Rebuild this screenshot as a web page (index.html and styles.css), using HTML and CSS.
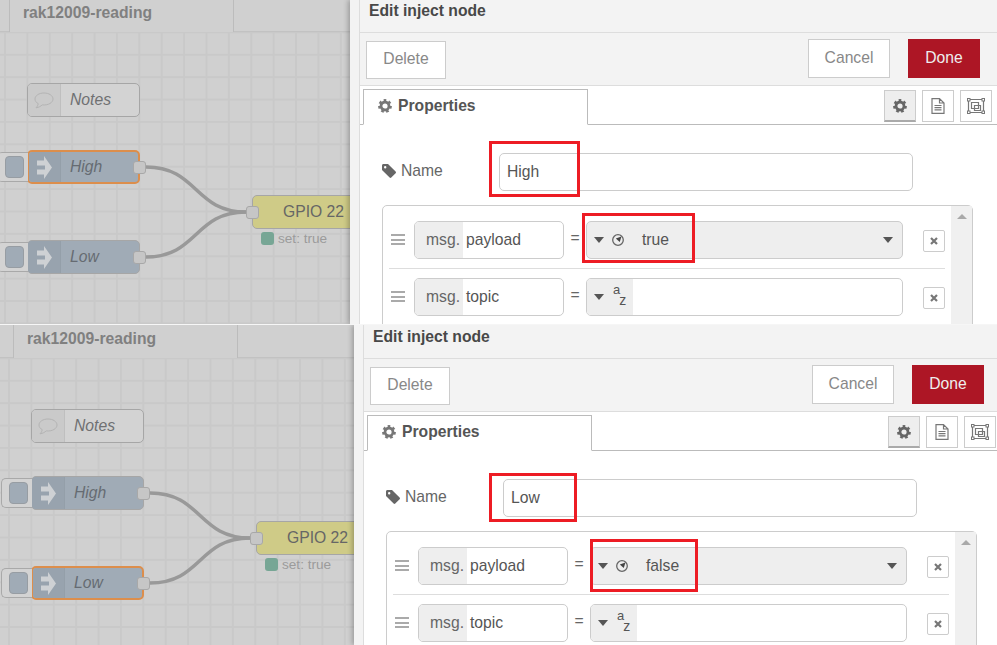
FILE: index.html
```html
<!DOCTYPE html>
<html lang="en">
<head>
    <meta charset="UTF-8">
    <meta name="viewport" content="width=device-width, initial-scale=1.0">
    <title>Edit inject node</title>
    <link rel="stylesheet" href="styles.css">
</head>
<body>
    <svg class="sprites" width="0" height="0">
        <symbol id="gear" viewBox="0 0 14 14">
            <circle cx="7" cy="7" r="4" fill="none" stroke="currentColor" stroke-width="2.8"/>
            <circle cx="7" cy="7" r="5.7" fill="none" stroke="currentColor" stroke-width="2.4" stroke-dasharray="2.6 2.37"/>
        </symbol>
        <symbol id="tag" viewBox="0 0 14 14">
            <path fill="currentColor" fill-rule="evenodd" d="M0 1.5 C0 .6 .6 0 1.5 0 H6 L13.6 7.6 C14.1 8.1 14.1 8.8 13.6 9.3 L9.3 13.6 C8.8 14.1 8.1 14.1 7.6 13.6 L0 6 Z M3.2 2 A1.2 1.2 0 1 0 3.2 4.4 A1.2 1.2 0 1 0 3.2 2 Z"/>
        </symbol>
        <symbol id="file" viewBox="0 0 14 16">
            <path fill="none" stroke="currentColor" stroke-width="1.2" d="M1 .6 H8.5 L13 5 V15.4 H1 Z M8.5 .6 V5 H13 M3.5 7.5 H10.5 M3.5 9.7 H10.5 M3.5 11.9 H10.5"/>
        </symbol>
        <symbol id="frame" viewBox="0 0 18 16">
            <path fill="none" stroke="currentColor" stroke-width="1.2" d="M2 1.5 H16 M2 14.5 H16 M1.5 2 V14 M16.5 2 V14 M4.5 4.5 H11.5 V10.5 H4.5 Z M7.5 7.5 H13.5 V12.5 H7.5 Z"/>
            <rect x=".5" y=".5" width="2.5" height="2.5" fill="#fff" stroke="currentColor"/>
            <rect x="15" y=".5" width="2.5" height="2.5" fill="#fff" stroke="currentColor"/>
            <rect x=".5" y="13" width="2.5" height="2.5" fill="#fff" stroke="currentColor"/>
            <rect x="15" y="13" width="2.5" height="2.5" fill="#fff" stroke="currentColor"/>
        </symbol>
        <symbol id="cross" viewBox="0 0 8 8">
            <path fill="none" stroke="currentColor" stroke-width="2.2" d="M1 1 L7 7 M7 1 L1 7"/>
        </symbol>
        <symbol id="dial" viewBox="0 0 12 12">
            <circle cx="6" cy="6" r="5.3" fill="none" stroke="currentColor" stroke-width="1.3"/>
            <path fill="#444" d="M9.4 2.6 L7.8 8 L3.8 4.4 Z"/>
        </symbol>
        <symbol id="inject" viewBox="0 0 15 23">
            <path fill="currentColor" d="M7 0 L15 11.5 L7 23 V18.5 H0 V13.5 H8 V9.5 H0 V4.5 H7 Z"/>
        </symbol>
        <symbol id="comment" viewBox="0 0 20 17">
            <path fill="none" stroke="currentColor" d="M10 1 C5 1 1 3.6 1 7 C1 9 2.2 10.6 4.2 11.6 C4 13 3.3 14.6 2 15.8 C4.8 15.4 6.8 14.2 8.2 12.9 C14.5 13.5 19 10.5 19 7 C19 3.6 15 1 10 1 Z"/>
        </symbol>
    </svg>

    <!-- first capture: High selected -->
    <section class="shot">
        <div class="canvas">
            <div class="canvas-tabs"><div class="canvas-tab">rak12009-reading</div></div>
            <div class="flow">
                <svg class="wires" width="360" height="324">
                    <path d="M146 167 C198 167 194 212 246 212"/>
                    <path d="M146 257 C198 257 194 212 246 212"/>
                </svg>
                <div class="node node-comment node-notes">
                    <div class="node-icon"><svg width="20" height="17"><use href="#comment"/></svg></div>
                    <span class="node-label">Notes</span>
                </div>
                <div class="node node-inject node-high selected">
                    <div class="node-button"><span></span></div>
                    <div class="node-icon"><svg width="15" height="23"><use href="#inject"/></svg></div>
                    <span class="node-label">High</span>
                    <i class="port port-out"></i>
                </div>
                <div class="node node-inject node-low">
                    <div class="node-button"><span></span></div>
                    <div class="node-icon"><svg width="15" height="23"><use href="#inject"/></svg></div>
                    <span class="node-label">Low</span>
                    <i class="port port-out"></i>
                </div>
                <div class="node node-gpio">
                    <i class="port port-in"></i>
                    <span class="gpio-label">GPIO 22</span>
                    <div class="node-status"><i></i>set: true</div>
                </div>
            </div>
        </div>
        <div class="gutter"></div>
        <div class="tray">
            <div class="tray-title">Edit inject node</div>
            <div class="tray-actions">
                <button class="btn btn-delete">Delete</button>
                <div class="btn-group">
                    <button class="btn">Cancel</button>
                    <button class="btn btn-done">Done</button>
                </div>
            </div>
            <div class="tabs">
                <div class="tab"><svg width="14" height="14"><use href="#gear"/></svg>Properties</div>
                <div class="tab-tools">
                    <div class="tool active"><svg width="14" height="14"><use href="#gear"/></svg></div>
                    <div class="tool"><svg width="14" height="16"><use href="#file"/></svg></div>
                    <div class="tool"><svg width="18" height="16"><use href="#frame"/></svg></div>
                </div>
            </div>
            <div class="form">
                <div class="name-row">
                    <label class="name-label"><svg width="14" height="14"><use href="#tag"/></svg>Name</label>
                    <div class="field">High</div>
                </div>
                <div class="prop-list">
                    <div class="prop-rows">
                        <div class="prop-row">
                            <div class="handle"></div>
                            <div class="msg-field"><span class="msg-prefix">msg.</span>payload</div>
                            <span class="equals">=</span>
                            <div class="typed typed-wide">
                                <i class="caret"></i>
                                <svg class="dial" width="12" height="12"><use href="#dial"/></svg>
                                <span class="typed-value">true</span>
                                <i class="caret caret-end"></i>
                            </div>
                            <button class="remove"><svg width="8" height="8"><use href="#cross"/></svg></button>
                        </div>
                        <div class="prop-row">
                            <div class="handle"></div>
                            <div class="msg-field"><span class="msg-prefix">msg.</span>topic</div>
                            <span class="equals">=</span>
                            <div class="typed">
                                <div class="typed-select"><i class="caret"></i><span class="az"><sup>a</sup><sub>z</sub></span></div>
                            </div>
                            <button class="remove"><svg width="8" height="8"><use href="#cross"/></svg></button>
                        </div>
                    </div>
                    <div class="scrollbar"><i></i></div>
                </div>
            </div>
            <div class="mark mark-name-high"></div>
            <div class="mark mark-value-high"></div>
        </div>
    </section>

    <!-- second capture: Low selected -->
    <section class="shot shot-low">
        <div class="canvas">
            <div class="canvas-tabs"><div class="canvas-tab">rak12009-reading</div></div>
            <div class="flow">
                <svg class="wires" width="360" height="324">
                    <path d="M146 167 C198 167 194 212 246 212"/>
                    <path d="M146 257 C198 257 194 212 246 212"/>
                </svg>
                <div class="node node-comment node-notes">
                    <div class="node-icon"><svg width="20" height="17"><use href="#comment"/></svg></div>
                    <span class="node-label">Notes</span>
                </div>
                <div class="node node-inject node-high">
                    <div class="node-button"><span></span></div>
                    <div class="node-icon"><svg width="15" height="23"><use href="#inject"/></svg></div>
                    <span class="node-label">High</span>
                    <i class="port port-out"></i>
                </div>
                <div class="node node-inject node-low selected">
                    <div class="node-button"><span></span></div>
                    <div class="node-icon"><svg width="15" height="23"><use href="#inject"/></svg></div>
                    <span class="node-label">Low</span>
                    <i class="port port-out"></i>
                </div>
                <div class="node node-gpio">
                    <i class="port port-in"></i>
                    <span class="gpio-label">GPIO 22</span>
                    <div class="node-status"><i></i>set: true</div>
                </div>
            </div>
        </div>
        <div class="gutter"></div>
        <div class="tray">
            <div class="tray-title">Edit inject node</div>
            <div class="tray-actions">
                <button class="btn btn-delete">Delete</button>
                <div class="btn-group">
                    <button class="btn">Cancel</button>
                    <button class="btn btn-done">Done</button>
                </div>
            </div>
            <div class="tabs">
                <div class="tab"><svg width="14" height="14"><use href="#gear"/></svg>Properties</div>
                <div class="tab-tools">
                    <div class="tool active"><svg width="14" height="14"><use href="#gear"/></svg></div>
                    <div class="tool"><svg width="14" height="16"><use href="#file"/></svg></div>
                    <div class="tool"><svg width="18" height="16"><use href="#frame"/></svg></div>
                </div>
            </div>
            <div class="form">
                <div class="name-row">
                    <label class="name-label"><svg width="14" height="14"><use href="#tag"/></svg>Name</label>
                    <div class="field">Low</div>
                </div>
                <div class="prop-list">
                    <div class="prop-rows">
                        <div class="prop-row">
                            <div class="handle"></div>
                            <div class="msg-field"><span class="msg-prefix">msg.</span>payload</div>
                            <span class="equals">=</span>
                            <div class="typed typed-wide">
                                <i class="caret"></i>
                                <svg class="dial" width="12" height="12"><use href="#dial"/></svg>
                                <span class="typed-value">false</span>
                                <i class="caret caret-end"></i>
                            </div>
                            <button class="remove"><svg width="8" height="8"><use href="#cross"/></svg></button>
                        </div>
                        <div class="prop-row">
                            <div class="handle"></div>
                            <div class="msg-field"><span class="msg-prefix">msg.</span>topic</div>
                            <span class="equals">=</span>
                            <div class="typed">
                                <div class="typed-select"><i class="caret"></i><span class="az"><sup>a</sup><sub>z</sub></span></div>
                            </div>
                            <button class="remove"><svg width="8" height="8"><use href="#cross"/></svg></button>
                        </div>
                    </div>
                    <div class="scrollbar"><i></i></div>
                </div>
            </div>
            <div class="mark mark-name-low"></div>
            <div class="mark mark-value-low"></div>
        </div>
    </section>
</body>
</html>
```

FILE: styles.css
```css
*{
    padding: 0;
    margin: 0;
    box-sizing: border-box;
    font-family: "Liberation Sans", Arial, sans-serif;
}
html, body{
    width: 997px;
    height: 645px;
    overflow: hidden;
    background: #f3f3f3;
}
body{
    font-size: 15.7px;
    color: #555;
}
.sprites{
    position: absolute;
}

/* each capture is a canvas on the left and the edit tray on the right */
.shot{
    display: flex;
    height: 324px;
    overflow: hidden;
}
.shot-low{
    height: 321px;
    border-top: 1px solid #f6f6f6;
}

/* canvas */
.canvas{
    position: relative;
    flex: none;
    width: 350px;
    overflow: hidden;
    background-color: #d0d0d0;
    background-image:
        linear-gradient(#c9c9c9 2px, transparent 2px),
        linear-gradient(90deg, #c9c9c9 2px, transparent 2px);
    background-size: 22.4px 22.4px;
    background-position: 4px 9px;
}
.shot-low .canvas{
    width: 354px;
    background-position: 8px 10px;
}
.canvas-tabs{
    height: 32px;
    padding-left: 9px;
    background: #d0d0d0;
    border-bottom: 1px solid #c2c2c2;
}
.shot-low .canvas-tabs{
    height: 33px;
    padding-left: 13px;
}
.canvas-tab{
    width: 225px;
    height: 32px;
    padding: 4px 0 0 13px;
    font-weight: bold;
    color: #808080;
    background: #d0d0d0;
    border-left: 1px solid #bcbcbc;
    border-right: 1px solid #bcbcbc;
}
.shot-low .canvas-tab{
    height: 33px;
    padding-top: 5px;
}
.flow{
    position: absolute;
    left: 0;
    top: 0;
}
.shot-low .flow{
    left: 4px;
    top: 1px;
}
.wires{
    position: absolute;
    left: 0;
    top: 0;
}
.wires path{
    fill: none;
    stroke: #999;
    stroke-width: 3.5;
}

/* nodes */
.node{
    position: absolute;
    display: flex;
    align-items: center;
    left: 27px;
    width: 113px;
    height: 34px;
    border: 1px solid #a6a6a6;
    border-radius: 5px;
    background: #a0abb6;
}
.node.selected{
    border: 2px solid #dc8e4c;
}
.node-notes{
    top: 83px;
    background: #d3d3d3;
}
.node-high{
    top: 150px;
}
.node-low{
    top: 240px;
}
.node-icon{
    flex: none;
    display: flex;
    align-items: center;
    justify-content: center;
    align-self: stretch;
    width: 33px;
    color: #ced1d4;
    background: #98a3ae;
    border-right: 1px solid #949fa9;
    border-radius: 4px 0 0 4px;
}
.selected .node-icon{
    width: 32px;
}
.node-comment .node-icon{
    color: #b4b4b4;
    background: #cacaca;
    border-right-color: #bfbfbf;
}
.node-label{
    padding-left: 9px;
    font-style: italic;
    color: #666b72;
}
.node-comment .node-label{
    color: #6f7072;
}
.node-button{
    position: absolute;
    left: -31px;
    top: 1px;
    width: 31px;
    height: 30px;
    padding: 3px 0 0 7px;
    background: #d3d3d3;
    border: 1px solid #a9a9a9;
    border-right: none;
    border-radius: 5px 0 0 5px;
}
.selected .node-button{
    left: -32px;
    top: 0;
}
.node-button span{
    display: block;
    width: 19px;
    height: 22px;
    background: #a0abb6;
    border: 1px solid #979da3;
    border-radius: 4px;
}
.port{
    position: absolute;
    width: 13px;
    height: 13px;
    background: #c6c6c6;
    border: 1px solid #a8a8a8;
    border-radius: 3px;
}
.port-out{
    left: 105px;
    top: 10px;
}
.selected .port-out{
    left: 104px;
    top: 9px;
}
.port-in{
    left: -7px;
    top: 10px;
}
.node-gpio{
    left: 252px;
    top: 195px;
    width: 130px;
    background: #cfcb87;
}
.gpio-label{
    padding-left: 30px;
    color: #666;
}
.node-status{
    position: absolute;
    display: flex;
    align-items: center;
    gap: 4px;
    left: 8px;
    top: 35px;
    font-size: 13.6px;
    color: #9b9b9b;
    white-space: nowrap;
}
.node-status i{
    width: 13px;
    height: 13px;
    background: #77a695;
    border-radius: 3px;
}

/* shadow between canvas and tray */
.gutter{
    flex: none;
    position: relative;
    width: 10px;
    background: #f3f3f3;
    border-right: 1px solid #ddd;
    box-shadow: -2px 0 5px rgba(0,0,0,0.25);
}

/* tray */
.tray{
    position: relative;
    flex: none;
    width: 637px;
    background: #fff;
}
.tray-title{
    height: 33px;
    padding: 2px 0 0 9px;
    font-weight: bold;
    color: #484848;
    background: #f3f3f3;
    border-bottom: 1px solid #ddd;
}
.shot-low .tray-title{
    height: 34px;
    padding-top: 3px;
}
.tray-actions{
    display: flex;
    justify-content: space-between;
    align-items: flex-start;
    height: 53px;
    padding: 6px 17px 0 6px;
    background: #f3f3f3;
    border-bottom: 1px solid #ddd;
}
.btn{
    height: 39px;
    width: 82px;
    padding-bottom: 2px;
    font-size: 15.7px;
    color: #888;
    background: #fff;
    border: 1px solid #ccc;
}
.btn-delete{
    width: 80px;
    margin-top: 2px;
    height: 38px;
}
.btn-group{
    display: flex;
    gap: 18px;
}
.btn-done{
    width: 72px;
    color: #eee;
    background: #ad1625;
    border-color: #ad1625;
}
.tabs{
    display: flex;
    justify-content: space-between;
    align-items: flex-end;
    height: 39px;
    padding: 0 5px 0 3px;
    border-bottom: 1px solid #bbb;
}
.tab{
    display: flex;
    align-items: center;
    gap: 6px;
    width: 225px;
    height: 36px;
    margin-bottom: -1px;
    padding: 0 0 3px 14px;
    font-weight: bold;
    color: #555;
    background: #fff;
    border: 1px solid #bbb;
    border-bottom: 1px solid #fff;
}
.tab svg{
    color: #777;
}
.tab-tools{
    display: flex;
    gap: 6px;
    margin-bottom: 2px;
}
.tool{
    display: flex;
    align-items: center;
    justify-content: center;
    width: 32px;
    height: 32px;
    color: #777;
    background: #fff;
    border: 1px solid #ccc;
}
.tool.active{
    color: #666;
    background: #eee;
    border-bottom: 2px solid #aaa;
}

/* form */
.form{
    padding: 28px 0 0 22px;
}
.name-row{
    display: flex;
    align-items: center;
}
.name-label{
    display: flex;
    align-items: center;
    gap: 5px;
    width: 117px;
    padding-bottom: 3px;
    color: #666;
}
.name-label svg{
    color: #666;
}
.field{
    width: 414px;
    height: 38px;
    padding: 9px 0 0 7px;
    background: #fff;
    border: 1px solid #ccc;
    border-radius: 5px;
}
.prop-list{
    display: flex;
    width: 591px;
    height: 160px;
    margin-top: 14px;
    border: 1px solid #ccc;
    border-radius: 5px;
}
.prop-rows{
    flex: 1;
    padding: 15px 0 0 6px;
}
.prop-row{
    display: flex;
    align-items: flex-start;
    height: 48px;
    margin-bottom: 9px;
    border-bottom: 1px solid #ddd;
}
.handle{
    width: 14px;
    height: 11px;
    margin: 13px 9px 0 2px;
    border-top: 2px solid #aaa;
    border-bottom: 2px solid #aaa;
    background: linear-gradient(#aaa, #aaa) center / 100% 2px no-repeat;
}
.msg-field{
    display: flex;
    align-items: center;
    width: 150px;
    height: 38px;
    color: #555;
    background: #fff;
    border: 1px solid #ccc;
    border-radius: 5px;
    overflow: hidden;
}
.msg-prefix{
    display: flex;
    align-items: center;
    align-self: stretch;
    width: 48px;
    margin-right: 3px;
    padding-left: 11px;
    color: #666;
    background: #eee;
}
.equals{
    width: 22px;
    padding-top: 8px;
    text-align: center;
    color: #666;
}
.typed{
    display: flex;
    align-items: center;
    width: 317px;
    height: 38px;
    background: #fff;
    border: 1px solid #ccc;
    border-radius: 5px;
    overflow: hidden;
}
.typed-wide{
    padding-left: 7px;
    background: #eee;
}
.typed-select{
    display: flex;
    align-items: center;
    align-self: stretch;
    width: 46px;
    padding-left: 7px;
    background: #eee;
}
.caret{
    flex: none;
    width: 0;
    height: 0;
    border-left: 5px solid transparent;
    border-right: 5px solid transparent;
    border-top: 6px solid #555;
}
.caret-end{
    margin-left: auto;
    margin-right: 9px;
}
.dial{
    margin-left: 8px;
    color: #666;
}
.typed-value{
    margin-left: 18px;
    color: #555;
}
.az{
    display: flex;
    margin-left: 9px;
    font-size: 13px;
    color: #555;
}
.az sup{
    font-size: 13px;
    line-height: 1;
    margin-top: -4px;
}
.az sub{
    font-size: 14px;
    line-height: 1;
    margin-top: 6px;
    margin-left: -1px;
}
.remove{
    display: flex;
    align-items: center;
    justify-content: center;
    width: 22px;
    height: 22px;
    margin: 9px 0 0 20px;
    color: #777;
    background: #fff;
    border: 1px solid #ccc;
    border-radius: 2px;
}
.scrollbar{
    flex: none;
    width: 21px;
    margin-left: 6px;
    padding: 8px 0 0 6px;
    background: #f0f0f0;
}
.scrollbar i{
    display: block;
    width: 0;
    height: 0;
    border-left: 5px solid transparent;
    border-right: 5px solid transparent;
    border-bottom: 5px solid #a9a9a9;
}

/* red annotation boxes drawn over the capture */
.mark{
    position: absolute;
    border: 3px solid #ed1c24;
}
.mark-name-high{
    left: 129px;
    top: 141px;
    width: 91px;
    height: 56px;
}
.mark-value-high{
    left: 222px;
    top: 213px;
    width: 113px;
    height: 50px;
}
.mark-name-low{
    left: 125px;
    top: 148px;
    width: 88px;
    height: 49px;
}
.mark-value-low{
    left: 226px;
    top: 214px;
    width: 108px;
    height: 53px;
}
```
